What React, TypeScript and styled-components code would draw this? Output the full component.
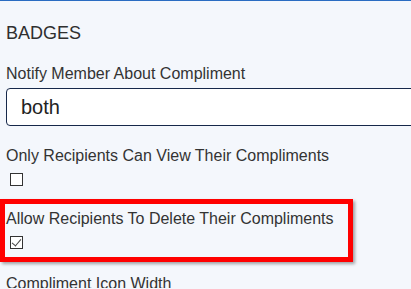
import styled, { createGlobalStyle } from "styled-components";

const GlobalStyle = createGlobalStyle`
  body {
    margin: 0;
    background: #f4f7fc;
    font-family: "Liberation Sans", Arial, sans-serif;
    color: #333;
  }
`;

const Page = styled.div`
  border-top: 1px solid #2a6cc2;
  padding: 22px 6px 0;
  display: flex;
  flex-direction: column;
  gap: 21px;
  overflow: hidden;
  height: 288px;
  box-sizing: border-box;
`;

const Heading = styled.div`
  font-size: 18px;
  color: #2f2f2f;
`;

const Field = styled.div<{ $highlight?: boolean }>`
  position: relative;
  display: flex;
  flex-direction: column;

  ${({ $highlight }) =>
    $highlight &&
    `
    margin-bottom: 2px;

    &::before {
      content: "";
      position: absolute;
      top: -11px;
      left: -6px;
      width: 353px;
      height: 63px;
      box-sizing: border-box;
      border: 5px solid #ff0000;
      box-shadow: 2px 2px 3px rgba(0, 0, 0, 0.35);
      pointer-events: none;
    }
  `}
`;

const Label = styled.label`
  font-size: 16px;
  margin-bottom: 5px;
  color: #333;
`;

const Select = styled.div`
  height: 38px;
  box-sizing: border-box;
  margin-right: -20px;
  border: 1px solid #16284a;
  border-radius: 4px;
  background: #fff;
  padding-left: 14px;
  display: flex;
  align-items: center;
  font-size: 20px;
  color: #222;
`;

const Check = styled.input.attrs({ type: "checkbox" })`
  appearance: none;
  display: block;
  position: relative;
  width: 13px;
  height: 13px;
  margin: 3px 3px 3px 4px;
  border: 1px solid #333;
  background: #fff;
  box-sizing: border-box;

  &:checked::after {
    content: "";
    position: absolute;
    left: 3px;
    top: 0px;
    width: 4px;
    height: 8px;
    border-right: 1px solid #444;
    border-bottom: 1px solid #444;
    transform: rotate(40deg);
  }
`;

function App() {
  return (
    <>
      <GlobalStyle />
      <Page>
        <Heading>BADGES</Heading>
        <Field>
          <Label>Notify Member About Compliment</Label>
          <Select>both</Select>
        </Field>
        <Field>
          <Label>Only Recipients Can View Their Compliments</Label>
          <Check readOnly />
        </Field>
        <Field $highlight>
          <Label>Allow Recipients To Delete Their Compliments</Label>
          <Check readOnly checked />
        </Field>
        <Field>
          <Label>Compliment Icon Width</Label>
        </Field>
      </Page>
    </>
  );
}

export default App;
